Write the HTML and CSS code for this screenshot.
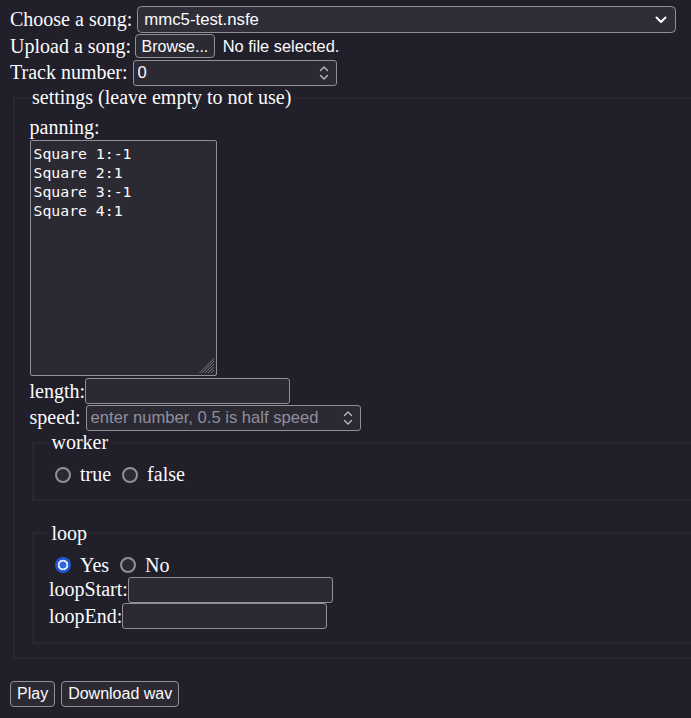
FILE: index.html
```html
<!DOCTYPE html>
<html lang="en">
<head>
<meta charset="utf-8">
<title>NSF player</title>
<link rel="stylesheet" href="styles.css">
</head>
<body>
<div class="row r1">
  <label class="lbl">Choose a song:</label>
  <span class="selectbox">
    <select class="sel"><option>mmc5-test.nsfe</option></select>
    <svg class="chev" width="12" height="8" viewBox="0 0 12 8"><path d="M1.5 1.5 L6 6 L10.5 1.5" fill="none" stroke="#fbfbfe" stroke-width="2" stroke-linecap="round" stroke-linejoin="round"/></svg>
  </span>
</div>
<div class="row r2">
  <label class="lbl">Upload a song:</label>
  <span class="btn browse">Browse...</span>
  <span class="nofile">No file selected.</span>
</div>
<div class="row r3">
  <label class="lbl">Track number:</label>
  <span class="numbox w-track">
    <input class="inp" type="text" value="0">
    <svg class="spin" width="12" height="18" viewBox="0 0 12 18"><path d="M2.5 6.5 L6 3 L9.5 6.5 M2.5 11.5 L6 15 L9.5 11.5" fill="none" stroke="#b8b8c2" stroke-width="1.4" stroke-linecap="round" stroke-linejoin="round"/></svg>
  </span>
</div>
<fieldset class="fs outer">
  <legend class="lg">settings (leave empty to not use)</legend>
  <label class="blk">panning:</label>
  <span class="tawrap">
    <textarea class="ta">Square 1:-1
Square 2:1
Square 3:-1
Square 4:1</textarea>
    <svg class="grip" width="16" height="16" viewBox="0 0 16 16"><path d="M15 3 L3 15 M15 6 L6 15 M15 9 L9 15 M15 12 L12 15 M15 0.5 L0.5 15" fill="none" stroke="#77767f" stroke-width="1"/></svg>
  </span>
  <div class="row fr first">
    <label>length:</label><input class="field w-len" type="text">
  </div>
  <div class="row fr">
    <label class="lbl">speed:</label>
    <span class="numbox w-speed">
      <input class="inp" type="text" placeholder="enter number, 0.5 is half speed">
      <svg class="spin" width="12" height="18" viewBox="0 0 12 18"><path d="M2.5 6.5 L6 3 L9.5 6.5 M2.5 11.5 L6 15 L9.5 11.5" fill="none" stroke="#b8b8c2" stroke-width="1.4" stroke-linecap="round" stroke-linejoin="round"/></svg>
    </span>
  </div>
  <fieldset class="fs inner">
    <legend class="lg">worker</legend>
    <div class="row radios">
      <input class="radio" type="radio" name="worker" id="wt"><label for="wt" class="rl">true</label>
      <input class="radio" type="radio" name="worker" id="wf"><label for="wf" class="rl">false</label>
    </div>
  </fieldset>
  <div class="spacer"></div>
  <fieldset class="fs inner">
    <legend class="lg">loop</legend>
    <div class="row radios">
      <input class="radio" type="radio" name="loop" id="ly" checked><label for="ly" class="rl">Yes</label>
      <input class="radio" type="radio" name="loop" id="ln"><label for="ln" class="rl">No</label>
    </div>
    <div class="row lr">
      <label>loopStart:</label><input class="field w-len" type="text">
    </div>
    <div class="row lr">
      <label>loopEnd:</label><input class="field w-len" type="text">
    </div>
  </fieldset>
</fieldset>
<div class="row actions">
  <button class="btn">Play</button>
  <button class="btn">Download wav</button>
</div>
</body>
</html>
```
FILE: styles.css
```css
html {
  background: #211f2a;
  overflow: hidden;
}
body {
  margin: 6px 0 0 10px;
  color: #fbfbfe;
  font-family: "Liberation Serif", "Times New Roman", serif;
  font-size: 20px;
  line-height: 23px;
}
.row {
  display: flex;
  align-items: center;
}
.r1 { height: 27px; }
.r2 { height: 26px; }
.r3 { height: 27px; }
.lbl { margin-right: 5px; }

.selectbox {
  display: inline-flex;
  align-items: center;
  box-sizing: border-box;
  width: 539px;
  height: 27px;
  border: 1.25px solid #8f8f9d;
  border-radius: 4.5px;
  background: #2f2e38;
  padding: 0 8px 0 6px;
}
.sel {
  appearance: none;
  flex: 1;
  border: 0;
  background: transparent;
  color: #fbfbfe;
  font-family: "Liberation Sans", Arial, sans-serif;
  font-size: 16.8px;
  padding: 0;
  outline: none;
}
.chev { flex: none; }

.btn {
  display: inline-flex;
  align-items: center;
  box-sizing: border-box;
  height: 26px;
  padding: 0 5.5px;
  border: 1.25px solid #8f8f9d;
  border-radius: 4px;
  background: #2b2a33;
  color: #fbfbfe;
  font-family: "Liberation Sans", Arial, sans-serif;
  font-size: 16px;
}
.browse { height: 24px; margin-left: -1px; }
.nofile {
  margin-left: 8px;
  font-family: "Liberation Sans", Arial, sans-serif;
  font-size: 16.4px;
}

.numbox {
  display: inline-flex;
  align-items: center;
  box-sizing: border-box;
  height: 26px;
  border: 1.25px solid #8f8f9d;
  border-radius: 3px;
  background: #2b2a33;
  padding: 0 6px 0 4px;
}
.w-track { width: 204px; }
.w-speed { width: 275px; }
.inp {
  flex: 1;
  min-width: 0;
  border: 0;
  background: transparent;
  color: #fbfbfe;
  font-family: "Liberation Sans", Arial, sans-serif;
  font-size: 16.6px;
  padding: 0;
  outline: none;
}
.inp::placeholder { color: #8f8f9d; opacity: 1; }
.spin { flex: none; }

.field {
  box-sizing: border-box;
  height: 26px;
  border: 1.25px solid #8f8f9d;
  border-radius: 3px;
  background: #2b2a33;
  color: #fbfbfe;
  font-family: "Liberation Sans", Arial, sans-serif;
  font-size: 16.6px;
  padding: 0 4px;
  outline: none;
}
.w-len { width: 205px; }

.fs {
  margin: 0 -60px 0 2.5px;
  border: 2.5px solid #292831;
  padding: 7px 15px 12.5px;
  min-width: 0;
}
.inner { margin-right: 0; }
.lg {
  padding: 0 2.5px;
  line-height: 23px;
}
.blk { display: block; }

.tawrap {
  display: block;
  position: relative;
  width: 187px;
  height: 236px;
  margin-top: 1px;
}
.ta {
  box-sizing: border-box;
  display: block;
  width: 187px;
  height: 236px;
  margin: 0;
  border: 1.25px solid #8f8f9d;
  border-radius: 2px;
  background: #2b2a33;
  color: #fbfbfe;
  font-family: "DejaVu Sans Mono", monospace;
  font-size: 14.8px;
  line-height: 19px;
  padding: 3px 3px;
  resize: none;
  outline: none;
}
.grip {
  position: absolute;
  right: 2px;
  bottom: 2px;
}
.fr { height: 26.5px; }
.fr.first { margin-top: 2px; }

.radios { height: 23px; margin-top: 2px; }
.radio {
  appearance: none;
  box-sizing: border-box;
  width: 16px;
  height: 16px;
  margin: 0 3.75px 0 6.25px;
  border: 2px solid #8f8f9d;
  border-radius: 50%;
  background: #2b2a33;
}
.radio:checked {
  border: 0;
  background: radial-gradient(circle, #2f66df 0 3.2px, #e6ebfb 3.8px 5px, #1f57d4 5.6px);
}
.rl { margin-left: 5px; margin-right: 5px; }
.spacer { height: 21px; }
.lr { height: 26.5px; }

.actions {
  margin-top: 22px;
  gap: 6px;
}
.actions .btn { height: 26px; padding: 0 6px; }
```
